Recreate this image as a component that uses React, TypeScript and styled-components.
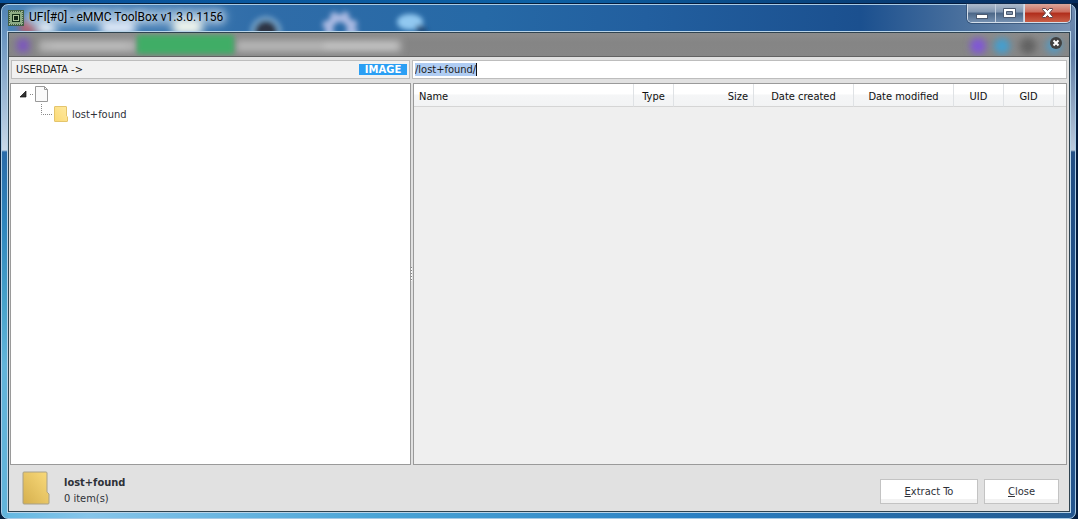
import React from 'react';
import styled, { createGlobalStyle } from 'styled-components';

const GlobalStyle = createGlobalStyle`
  *, *::before, *::after { box-sizing: border-box; }
  body {
    margin: 0;
    background: #06305f;
    color: #1c1c1c;
    font: 11px/14px "DejaVu Sans Condensed", "Noto Sans", sans-serif;
  }
  button, input { font: inherit; color: inherit; }
`;

const Desktop = styled.div`
  min-height: 100vh;
  display: flex;
  padding: 4px 2px 0 1px;
  background: linear-gradient(90deg, #075099, #0d61a5 50%, #052a5c) top / 100% 3px no-repeat, linear-gradient(90deg, #06203c 50%, #041c3e 50%);
`;

const Frame = styled.div`
  flex: 1;
  min-width: 0;
  display: flex;
  flex-direction: column;
  padding: 0 4px 5px 5px;
  border: 1px solid #a9cbe6;
  border-radius: 7px;
  background:
    linear-gradient(180deg, #4f82b4, #7aa0c6 50px, #c8d8e8 145px, #2a6ba8 147px, #2f86bd 220px, #48a3cb 300px, #62b4da 360px) left / 6px 100% no-repeat,
    linear-gradient(180deg, #6f8bb0, #5f7da5 50px, #bccbdd 145px, #234f84 147px, #24568f) right / 5px 100% no-repeat,
    linear-gradient(90deg, #62b7e0, #86c5ea 8%, #4aa4d6 35%, #2a7fc2 65%, #22598f) bottom / 100% 6px no-repeat,
    linear-gradient(90deg, #4a84b8, #2f6ca8 25%, #2669a6 45%, #225f9f 60%, #1b508f 80%, #5b7ca3 93%, #7b95b6);
`;

const TitleBar = styled.header`
  display: flex;
  align-items: flex-start;
  height: 26px;
  position: relative;
`;

const Title = styled.h1`
  margin: 4px 0 0 5px;
  font: 12px/17px Roboto, "Open Sans", sans-serif;
  color: #000;
  text-shadow: 0 0 6px rgba(255, 255, 255, .7), 0 0 9px rgba(255, 255, 255, .6);
  position: relative;
`;

const AppIcon = styled.svg`
  margin: 5px 0 0 1px;
  flex: none;
  position: relative;
`;

const Reflections = styled.svg`
  position: absolute;
  left: 0;
  top: 0;
`;

const Controls = styled.div`
  display: flex;
  margin-left: auto;
  margin-top: -1px;
  border: 1px solid #d3deea;
  border-top: 0;
  border-radius: 0 0 5px 5px;
  overflow: hidden;
  box-shadow: 0 0 0 1px #1c355880;
`;

const ControlButton = styled.button<{ $close?: boolean }>`
  width: ${p => (p.$close ? 46 : 28)}px;
  height: 18px;
  padding: 0;
  border: 0;
  border-left: ${p => (p.$close ? 1 : 0)}px solid #d3deea;
  border-right: ${p => (p.$close ? 0 : 1)}px solid #c3cfde;
  display: grid;
  place-items: center;
  background: ${p => (p.$close
    ? 'linear-gradient(#dba79c, #cd6c5c 45%, #b02c1a 50%, #c95f48)'
    : 'linear-gradient(#aebbcc, #8196b1 45%, #4b6687 50%, #7590b0)')};
`;

const Client = styled.div`
  flex: 1;
  display: flex;
  border: 1px solid #b9d4e8;
`;

const Inner = styled.main`
  flex: 1;
  min-width: 0;
  display: flex;
  flex-direction: column;
  border: 1px solid #2f4350;
  background: #e1e1e1;
`;

const Toolbar = styled.div`
  display: flex;
  justify-content: space-between;
  height: 24px;
  border-bottom: 1px solid #626262;
  background: linear-gradient(#8c8c8c, #858585 40%, #868686);
  overflow: hidden;
`;

const BlurGroup = styled.svg`
  flex: none;
`;

const ToolbarEnd = styled.div`
  display: flex;
`;

const DismissButton = styled.button`
  width: 20px;
  height: 20px;
  margin: 0 3px 0 -24px;
  padding: 0;
  border: 0;
  display: grid;
  place-items: center;
  background: none;
`;

const PathRow = styled.div`
  display: flex;
  gap: 2px;
  padding: 3px 2px 4px;
`;

const PathBox = styled.div<{ $fixed?: boolean }>`
  flex: ${p => (p.$fixed ? '0 0 399px' : '1')};
  min-width: 0;
  height: 19px;
  display: flex;
  align-items: center;
  justify-content: space-between;
  padding: 0 ${p => (p.$fixed ? '2px 0 4px' : '2px')};
  border: 1px solid #bdbdbd;
  background: ${p => (p.$fixed ? '#f1f1f1' : '#fff')};
`;

const Badge = styled.strong`
  width: 48px;
  height: 11px;
  margin-bottom: 1px;
  text-align: center;
  background: #2b9ff4;
  color: #fff;
  font: bold 10px/11px "DejaVu Sans", sans-serif;
`;

const PathInput = styled.input`
  field-sizing: content;
  height: 13px;
  padding: 0;
  border: 0;
  border-right: 1px solid #111;
  outline: 0;
  background: #b0cdf3;
  line-height: 13px;
`;

const Panels = styled.div`
  flex: 1;
  display: flex;
  padding: 0 2px 0 1px;
`;

const TreePanel = styled.nav`
  flex: 0 0 401px;
  padding: 0 8px;
  border: 1px solid #9a9a9a;
  background: #fff;
`;

const Splitter = styled.div`
  width: 2px;
  display: flex;
  align-items: center;
  background: #e1e1e1;
`;

const Grip = styled.span`
  flex: none;
  width: 1px;
  height: 14px;
  background: repeating-linear-gradient(#888 0 1px, #fff 1px 3px);
`;

const FilePanel = styled.section`
  flex: 1;
  min-width: 0;
  border: 1px solid #9a9a9a;
  background: #efefef;
`;

const TreeList = styled.ul`
  margin: 0;
  padding: 0;
  list-style: none;
`;

const TreeItem = styled.div<{ $nested?: boolean }>`
  display: flex;
  align-items: center;
  height: 20px;
  padding-left: ${p => (p.$nested ? 22 : 0)}px;
  color: #2e3138;
`;

const TreeText = styled.span`
  margin-left: 4px;
  padding-top: 2px;
`;

const Files = styled.table`
  width: 100%;
  table-layout: fixed;
  border-collapse: separate;
  border-spacing: 0;
  color: #101010;
`;

const HeadCell = styled.th<{ $w?: number; $align?: string }>`
  width: ${p => (p.$w ? `${p.$w}px` : 'auto')};
  height: 23px;
  padding: 3px 5px 0;
  border-right: 1px solid #dfe2e5;
  border-bottom: 1px solid #d5d5d5;
  background: linear-gradient(#fff 45%, #f5f6f7 50%, #f2f3f4);
  font-weight: normal;
  text-align: ${p => p.$align || 'center'};
  white-space: nowrap;
  &:last-child { border-right: 0; }
`;

const Footer = styled.footer`
  display: flex;
  align-items: center;
  height: 46px;
  padding: 0 10px 0 13px;
`;

const Summary = styled.div`
  flex: 1;
  margin-left: 14px;
  padding-top: 6px;
  line-height: 16px;
  color: #2e3138;
`;

const Name = styled.div`
  font-weight: bold;
`;

const ActionButton = styled.button<{ $wide?: boolean }>`
  width: ${p => (p.$wide ? 98 : 75)}px;
  height: 25px;
  margin: 6px 0 0 6px;
  padding: 2px 0 0;
  border: 1px solid #c3c3c3;
  background: linear-gradient(#fff 82%, #f2f2f2 84%);
  color: #2e3138;
`;

const COLUMNS: { label: string; width?: number; align?: string }[] = [
  { label: 'Name', align: 'left' },
  { label: 'Type', width: 40 },
  { label: 'Size', width: 80, align: 'right' },
  { label: 'Date created', width: 100 },
  { label: 'Date modified', width: 100 },
  { label: 'UID', width: 50 },
  { label: 'GID', width: 50 },
  { label: '', width: 12 },
];

function TitleReflections() {
  return (
    <Reflections width="460" height="26" aria-hidden="true">
      <defs>
        <filter id="soft" x="-50%" y="-50%" width="200%" height="200%"><feGaussianBlur stdDeviation="4" /></filter>
        <filter id="fine" x="-50%" y="-50%" width="200%" height="200%"><feGaussianBlur stdDeviation="2.4" /></filter>
      </defs>
      <g filter="url(#soft)">
        <rect x="18" y="3" width="202" height="18" rx="9" fill="#c4d9ed" opacity=".5" />
        <path d="M12 14l9 3 14 12H14z" fill="#c55a62" />
        <path d="M30 17l17 3 3 8H33z" fill="#fff" />
        <rect x="94" y="16" width="34" height="14" fill="#dfe9f8" />
        <rect x="166" y="14" width="29" height="16" fill="#eef4ed" />
      </g>
      <g filter="url(#fine)">
        <circle cx="259" cy="27" r="16" fill="#6d9cc4" />
        <circle cx="259" cy="27" r="11" fill="#2d3444" />
        <circle cx="333" cy="24" r="11" fill="none" stroke="#a9b9e2" strokeWidth="8" />
        <circle cx="333" cy="24" r="16" fill="none" stroke="#a9b9e2" strokeWidth="4" strokeDasharray="6 7" />
        <ellipse cx="403" cy="17" rx="13" ry="8" fill="#91c8f0" />
        <path d="M409 20l8 1 5 8h-12z" fill="#244e7c" />
      </g>
    </Reflections>
  );
}

function Folder({ size }: { size: 'small' | 'large' }) {
  const large = size === 'large';
  return (
    <svg width={large ? 28 : 14} height={large ? 34 : 16} viewBox="0 0 28 34" preserveAspectRatio="none" aria-hidden="true">
      <defs>
        <linearGradient id={`folder-${size}`} x1="0" y1="1" x2="1" y2="0">
          <stop offset="0" stopColor={large ? '#d5af4d' : '#fbd975'} />
          <stop offset="1" stopColor={large ? '#fadb7c' : '#ffeaa0'} />
        </linearGradient>
      </defs>
      <path d="M2 1h22q1 0 1 1v19l2 2v9q0 1-1 1H2q-1 0-1-1V2q0-1 1-1z" fill={`url(#folder-${size})`} stroke={large ? '#a7a08a' : '#e3c268'} strokeWidth={large ? 1 : 2} />
      {large && <path d="M25 21l-1 2v9" fill="none" stroke="#e9c566" />}
    </svg>
  );
}

export default function App() {
  return (
    <>
      <GlobalStyle />
      <Desktop>
        <Frame>
          <TitleBar>
            <TitleReflections />
            <AppIcon width="16" height="16" viewBox="0 0 16 16" aria-hidden="true">
              <rect width="16" height="16" fill="#3f5f42" />
              <path d="M1 1.5h14M1 14.5h14M1.5 1v14M14.5 1v14" stroke="#a3b49b" strokeDasharray="1 1" />
              <rect x="2" y="2" width="12" height="12" fill="#8cab83" />
              <rect x="4" y="4" width="8" height="8" fill="#12301a" />
              <rect x="5" y="5" width="6" height="6" fill="#acc49b" />
              <rect x="6" y="6" width="4" height="4" fill="#112719" />
            </AppIcon>
            <Title>UFI[#0] - eMMC ToolBox v1.3.0.1156</Title>
            <Controls>
              <ControlButton aria-label="Minimize">
                <svg width="13" height="13"><rect x="1.5" y="7.5" width="11" height="4" fill="#fff" stroke="#4c5a70" /></svg>
              </ControlButton>
              <ControlButton aria-label="Maximize">
                <svg width="13" height="13">
                  <path d="M.5 1.5h12v9H.5z" fill="#fff" stroke="#4c5a70" />
                  <path d="M3.5 4.5h6v3h-6z" fill="#8294ab" stroke="#4c5a70" />
                </svg>
              </ControlButton>
              <ControlButton $close aria-label="Close window">
                <svg width="13" height="12">
                  <path d="M1.5 1.5h3l2 2 2-2h3v1L8.500 6l3 3.500v1h-3l-2-2-2 2h-3v-1l3-3.500-3-3.500z" fill="#fff" stroke="#624449" />
                </svg>
              </ControlButton>
            </Controls>
          </TitleBar>
          <Client>
            <Inner>
              <Toolbar>
                <BlurGroup width="410" height="23" aria-hidden="true">
                  <defs><filter id="tb" x="-50%" y="-80%" width="200%" height="260%"><feGaussianBlur stdDeviation="3.5" /></filter></defs>
                  <g filter="url(#tb)">
                    <rect x="8" y="6" width="12" height="13" fill="#7b56bd" />
                    <rect x="30" y="7" width="98" height="12" fill="#b4b4b4" />
                    <rect x="227" y="7" width="165" height="12" fill="#b4b4b4" />
                    <rect x="42" y="10" width="75" height="6" fill="#bebebe" />
                    <rect x="315" y="10" width="72" height="6" fill="#c6c6c6" />
                  </g>
                  <rect x="128" y="2" width="97" height="19" fill="#40ad66" filter="url(#fine)" />
                </BlurGroup>
                <ToolbarEnd>
                  <BlurGroup width="110" height="23" aria-hidden="true">
                    <g filter="url(#tb)">
                      <circle cx="18" cy="13" r="8" fill="#8056d6" />
                      <circle cx="42" cy="13" r="8" fill="#459fcf" />
                      <circle cx="68" cy="13" r="8" fill="#626262" />
                      <circle cx="94" cy="13" r="8" fill="#5999be" />
                    </g>
                  </BlurGroup>
                  <DismissButton aria-label="Dismiss panel">
                    <svg width="14" height="14">
                      <circle cx="7" cy="7" r="6" fill="#414141" />
                      <path d="M4.5 4.5l5 5m0-5l-5 5" stroke="#fff" strokeWidth="2" />
                    </svg>
                  </DismissButton>
                </ToolbarEnd>
              </Toolbar>
              <PathRow>
                <PathBox $fixed><span>USERDATA -&gt;</span><Badge>IMAGE</Badge></PathBox>
                <PathBox><PathInput aria-label="Path" defaultValue="/lost+found/" /></PathBox>
              </PathRow>
              <Panels>
                <TreePanel aria-label="Folders">
                  <TreeList>
                    <li>
                      <TreeItem>
                        <svg width="30" height="18" viewBox="0 0 30 18" aria-hidden="true">
                          <path d="M7 6v6H1z" fill="#333" stroke="#111" strokeWidth=".7" />
                          <path d="M11 9.5h4" stroke="#888" strokeDasharray="1 1" />
                          <path d="M16.500 1.500h9l3 3v12h-12z" fill="#fafafa" stroke="#999" />
                          <path d="M25.500 1.500v3h3" fill="none" stroke="#999" />
                        </svg>
                      </TreeItem>
                      <TreeList>
                        <li>
                          <TreeItem $nested>
                            <svg width="13" height="20" aria-hidden="true">
                              <path d="M.5 0v10.500H11" fill="none" stroke="#888" strokeDasharray="1 1" />
                            </svg>
                            <Folder size="small" />
                            <TreeText>lost+found</TreeText>
                          </TreeItem>
                        </li>
                      </TreeList>
                    </li>
                  </TreeList>
                </TreePanel>
                <Splitter><Grip /></Splitter>
                <FilePanel>
                  <Files>
                    <thead>
                      <tr>
                        {COLUMNS.map(c => (
                          <HeadCell key={c.label} $w={c.width} $align={c.align}>{c.label}</HeadCell>
                        ))}
                      </tr>
                    </thead>
                  </Files>
                </FilePanel>
              </Panels>
              <Footer>
                <Folder size="large" />
                <Summary><Name>lost+found</Name><div>0 item(s)</div></Summary>
                <ActionButton $wide><u>E</u>xtract To</ActionButton>
                <ActionButton><u>C</u>lose</ActionButton>
              </Footer>
            </Inner>
          </Client>
        </Frame>
      </Desktop>
    </>
  );
}
